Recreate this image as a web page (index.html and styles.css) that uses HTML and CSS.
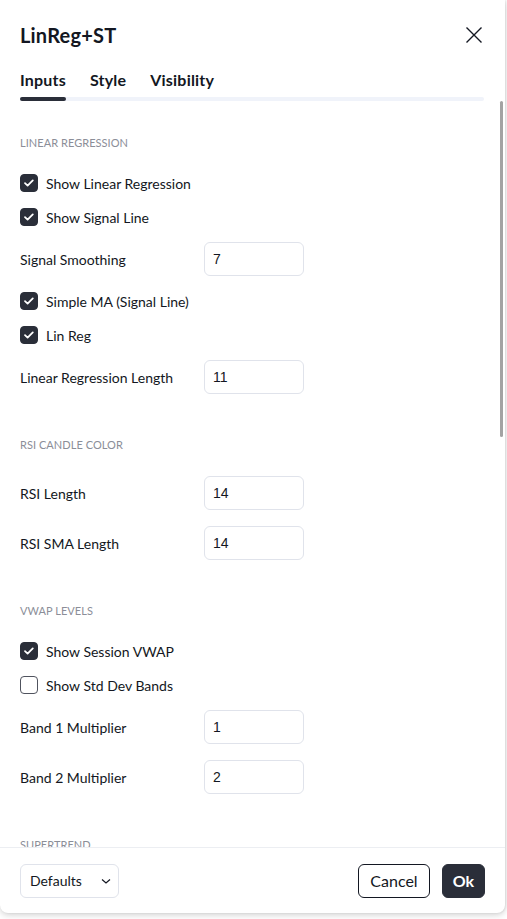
FILE: index.html
```html
<!DOCTYPE html>
<html lang="en">
<head>
<meta charset="utf-8">
<title>LinReg+ST</title>
<link rel="stylesheet" href="styles.css">
</head>
<body>
<div class="dialog">
  <header class="dialog-head">
    <h1 class="title">LinReg+ST</h1>
    <button class="close" aria-label="Close">
      <svg width="18" height="18" viewBox="0 0 18 18"><path d="M1.5 1.5l15 15M16.5 1.5l-15 15" stroke="#131722" stroke-width="1.4" fill="none"/></svg>
    </button>
  </header>

  <nav class="tabs">
    <div class="tab-list">
      <span class="tab active">Inputs</span>
      <span class="tab">Style</span>
      <span class="tab">Visibility</span>
    </div>
    <div class="tab-track"><div class="tab-ink"></div></div>
  </nav>

  <div class="content">
    <section class="group">
      <div class="group-title">Linear Regression</div>
      <label class="check-row"><span class="box on"></span>Show Linear Regression</label>
      <label class="check-row"><span class="box on"></span>Show Signal Line</label>
      <div class="input-row"><span class="label">Signal Smoothing</span><span class="field">7</span></div>
      <label class="check-row"><span class="box on"></span>Simple MA (Signal Line)</label>
      <label class="check-row"><span class="box on"></span>Lin Reg</label>
      <div class="input-row"><span class="label">Linear Regression Length</span><span class="field">11</span></div>
    </section>

    <section class="group">
      <div class="group-title">RSI Candle Color</div>
      <div class="input-row"><span class="label">RSI Length</span><span class="field">14</span></div>
      <div class="input-row"><span class="label">RSI SMA Length</span><span class="field">14</span></div>
    </section>

    <section class="group">
      <div class="group-title">VWAP Levels</div>
      <label class="check-row"><span class="box on"></span>Show Session VWAP</label>
      <label class="check-row"><span class="box"></span>Show Std Dev Bands</label>
      <div class="input-row"><span class="label">Band 1 Multiplier</span><span class="field">1</span></div>
      <div class="input-row"><span class="label">Band 2 Multiplier</span><span class="field">2</span></div>
    </section>

    <section class="group">
      <div class="group-title">Supertrend</div>
    </section>

    <div class="scroll-thumb"></div>
  </div>

  <footer class="dialog-foot">
    <div class="select">Defaults
      <svg width="12" height="8" viewBox="0 0 12 8"><path d="M2 2.5l4 3.5 4-3.5" stroke="#131722" stroke-width="1.2" fill="none"/></svg>
    </div>
    <div class="actions">
      <button class="btn btn-outline">Cancel</button>
      <button class="btn btn-solid">Ok</button>
    </div>
  </footer>
</div>
</body>
</html>
```

FILE: styles.css
```css
* { box-sizing: border-box; }

html, body {
  margin: 0;
  padding: 0;
  background: #ffffff;
}

body {
  font-family: Lato, "Noto Sans", sans-serif;
  color: #131722;
  height: 919px;
  overflow: hidden;
}

.dialog {
  position: relative;
  width: 505px;
  height: 913px;
  background: #ffffff;
  border-radius: 0 0 8px 8px;
  box-shadow: 0 2px 6px rgba(0, 0, 0, 0.18), 1px 0 2px rgba(0, 0, 0, 0.08);
  display: flex;
  flex-direction: column;
  overflow: hidden;
}

.dialog-head {
  height: 70px;
  padding: 0 22px 0 20px;
  display: flex;
  align-items: center;
  justify-content: space-between;
}

.title {
  margin: 0;
  font-size: 20px;
  font-weight: 700;
  letter-spacing: 0.2px;
}

.close {
  border: 0;
  background: none;
  padding: 0;
  width: 18px;
  height: 18px;
  display: flex;
}

.tabs {
  padding: 0 21px 0 20px;
}

.tab-list {
  display: flex;
  gap: 24px;
  height: 18px;
  align-items: center;
  font-size: 16px;
  font-weight: 700;
  letter-spacing: 0.2px;
}

.tab-track {
  margin-top: 9px;
  height: 4px;
  background: #f0f3fa;
  border-radius: 2px;
}

.tab-ink {
  width: 46px;
  height: 4px;
  background: #2a2e39;
  border-radius: 2px;
}

.content {
  position: relative;
  flex: 1;
  padding: 0 20px;
  overflow: hidden;
}

.group {
  padding-top: 31px;
}

.group + .group {
  padding-top: 32px;
}

.group-title {
  height: 20px;
  display: flex;
  align-items: center;
  font-size: 11px;
  text-transform: uppercase;
  color: #8b8e98;
  letter-spacing: 0.05px;
  margin-bottom: 14px;
}

.check-row {
  height: 34px;
  display: flex;
  align-items: center;
  gap: 8px;
  font-size: 14px;
}

.box {
  width: 18px;
  height: 18px;
  border-radius: 4px;
  border: 1px solid #50535e;
  flex: none;
}

.box.on {
  border-color: #2a2e39;
  background: #2a2e39 url("data:image/svg+xml,%3Csvg xmlns='http://www.w3.org/2000/svg' width='18' height='18' viewBox='0 0 18 18'%3E%3Cpath d='M5 9.2l2.6 2.4L12.8 6.4' stroke='white' stroke-width='1.8' fill='none' stroke-linecap='round' stroke-linejoin='round'/%3E%3C/svg%3E") center / 18px 18px no-repeat;
}

.input-row {
  height: 50px;
  display: flex;
  align-items: center;
  font-size: 14px;
}

.label {
  width: 184px;
}

.field {
  width: 100px;
  height: 34px;
  border: 1px solid #e0e3eb;
  border-radius: 6px;
  padding-left: 8px;
  display: flex;
  align-items: center;
  font-family: "Liberation Sans", Arial, sans-serif;
  font-size: 14px;
}

.scroll-thumb {
  position: absolute;
  top: 0;
  right: 2px;
  width: 3px;
  height: 336px;
  background: #a3a3a3;
  border-radius: 2px;
}

.dialog-foot {
  height: 66px;
  border-top: 1px solid #eceef2;
  padding: 0 20px;
  display: flex;
  align-items: center;
  justify-content: space-between;
}

.select {
  width: 99px;
  height: 34px;
  border: 1px solid #e0e3eb;
  border-radius: 6px;
  padding: 0 6px 0 9px;
  display: flex;
  align-items: center;
  justify-content: space-between;
  font-size: 14px;
}

.actions {
  display: flex;
  gap: 12px;
}

.btn {
  height: 34px;
  border-radius: 6px;
  font-family: Lato, "Noto Sans", sans-serif;
  font-size: 16px;
  padding: 0;
  display: flex;
  align-items: center;
  justify-content: center;
}

.btn-outline {
  width: 72px;
  background: #ffffff;
  border: 1px solid #131722;
  color: #131722;
}

.btn-solid {
  width: 43px;
  background: #2a2e39;
  border: 1px solid #2a2e39;
  color: #ffffff;
  font-weight: 700;
}
```
